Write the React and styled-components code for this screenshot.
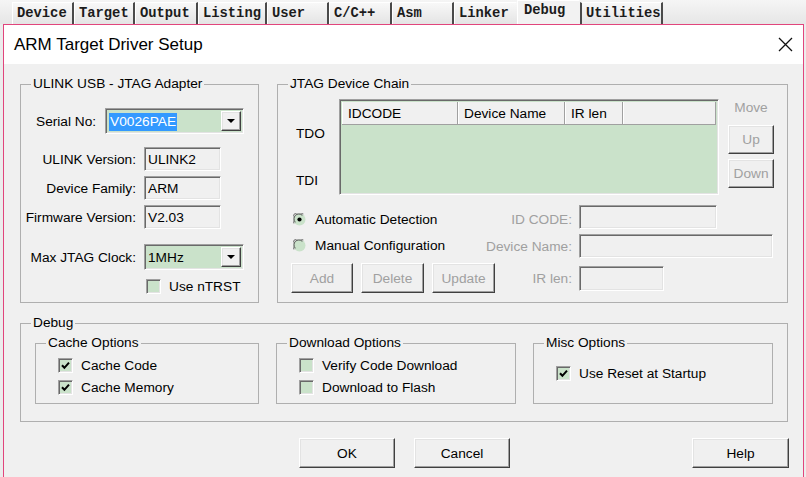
import React from 'react';
import styled, { createGlobalStyle, css } from 'styled-components';

const GREEN = '#cae2ca';
const PINK = '#e1457c';
const MUTED = '#a0a0a0';

const GlobalStyle = createGlobalStyle`
  html, body { margin: 0; padding: 0; background: #f0f0f0; overflow: hidden; }
  body {
    font-family: "Liberation Sans", Arial, sans-serif;
    font-size: 13.7px;
    color: #000;
  }
`;

const sunken = css`
  box-sizing: border-box;
  border: 1px solid;
  border-color: #a0a0a0 #ffffff #ffffff #a0a0a0;
  box-shadow: inset 1px 1px 0 #696969, inset -1px -1px 0 #e3e3e3;
`;

const raised = css`
  box-sizing: border-box;
  border: 1px solid;
  border-color: #ffffff #404040 #404040 #ffffff;
  box-shadow: inset -1px -1px 0 #a0a0a0, inset 1px 1px 0 #e3e3e3;
  background: #f0f0f0;
`;

const Screen = styled.div`
  width: 806px;
  height: 477px;
  overflow: hidden;
  display: flex;
  flex-direction: column;
  background: #ececec;
`;

/* ---------- tab strip behind the dialog ---------- */

const TabStrip = styled.div`
  display: flex;
  align-items: flex-end;
  height: 24px;
  flex-shrink: 0;
  padding-left: 12px;
  background: linear-gradient(#f5f5f5, #e6e6e6);
`;

const Tab = styled.div`
  box-sizing: border-box;
  width: ${p => p.$w}px;
  height: ${p => (p.$active ? 24 : 22)}px;
  padding: ${p => (p.$active ? '2px 0 0 6px' : '0 0 0 4px')};
  display: flex;
  align-items: ${p => (p.$active ? 'flex-start' : 'center')};
  font-family: "Liberation Mono", "Courier New", monospace;
  font-weight: bold;
  font-size: 13.8px;
  color: #1c1c1c;
  background: ${p => (p.$active ? '#f2f2f2' : 'linear-gradient(#f8f8f8, #e4e4e4)')};
  border-top: 1px solid #ffffff;
  border-left: ${p => (p.$leftDark ? '2px solid #4a4a4a' : '1px solid #ffffff')};
  border-right: ${p => (p.$sep ? '2px solid #4a4a4a' : '1px solid transparent')};
`;

/* ---------- dialog frame ---------- */

const Dialog = styled.div`
  flex: 1;
  margin-left: 3px;
  width: 801px;
  box-sizing: border-box;
  border: 1px solid ${PINK};
  border-bottom: none;
  display: flex;
  flex-direction: column;
  background: #f0f0f0;
`;

const TitleBar = styled.div`
  height: 39px;
  flex-shrink: 0;
  display: flex;
  align-items: center;
  justify-content: space-between;
  padding: 0 10px 0 10px;
  background: #ffffff;
`;

const Title = styled.span`
  font-family: "Liberation Sans", Arial, sans-serif;
  font-size: 17px;
  color: #000;
`;

const Body = styled.div`
  padding: 12px 15px 0 16px;
  display: flex;
  flex-direction: column;
`;

const TopRow = styled.div`
  display: flex;
  gap: 18px;
`;

const Group = styled.fieldset`
  margin: 0;
  margin-top: ${p => p.$top || 0}px;
  min-width: 0;
  box-sizing: border-box;
  width: ${p => (p.$w ? `${p.$w}px` : 'auto')};
  flex: ${p => (p.$w ? '0 0 auto' : '1')};
  padding: ${p => p.$pad};
  border: 1px solid #afafaf;
  display: flex;
  flex-direction: column;
`;

const GroupTitle = styled.legend`
  margin-left: 10px;
  padding: 0 2px;
  line-height: 16px;
  font-size: 13.7px;
`;

/* ---------- controls ---------- */

const Label = styled.span`
  color: ${p => (p.$muted ? MUTED : '#000')};
  text-align: ${p => (p.$right ? 'right' : 'left')};
  white-space: nowrap;
  margin-top: ${p => p.$down || 0}px;
`;

const Combo = styled.div`
  ${sunken};
  width: ${p => p.$w}px;
  height: 26px;
  padding: 2px;
  display: flex;
  align-items: center;
  background: ${GREEN};
`;

const ComboText = styled.span`
  flex: 1;
  padding-left: 1px;
`;

const Selected = styled.span`
  background: #3399ff;
  color: #ffffff;
  padding: 1px 1px 2px;
`;

const DropButton = styled.span`
  ${raised};
  width: 20px;
  height: 20px;
  display: flex;
  align-items: center;
  justify-content: center;
  &::after {
    content: '';
    border-left: 4px solid transparent;
    border-right: 4px solid transparent;
    border-top: 4px solid #000;
  }
`;

const Field = styled.div`
  ${sunken};
  width: ${p => p.$w}px;
  height: ${p => p.$h || 24}px;
  padding: 0 3px;
  display: flex;
  align-items: center;
  background: #f0f0f0;
`;

const Button = styled.div`
  ${raised};
  width: ${p => p.$w}px;
  height: ${p => p.$h || 30}px;
  display: flex;
  align-items: center;
  justify-content: center;
  color: ${p => (p.$disabled ? MUTED : '#000')};
`;

const CheckRow = styled.div`
  display: flex;
  align-items: center;
  gap: 8px;
  height: 15px;
  padding-left: ${p => p.$indent || 0}px;
`;

const Box = styled.span`
  ${sunken};
  width: 15px;
  height: 15px;
  flex-shrink: 0;
  display: inline-flex;
  align-items: center;
  justify-content: center;
  background: ${GREEN};
`;

const CheckBox = ({ checked, indent, children }) => (
  <CheckRow $indent={indent}>
    <Box>
      {checked && (
        <svg width="9" height="9" viewBox="0 0 9 9">
          <path d="M1 4.2 L3.4 6.8 L8 1.6" fill="none" stroke="#000" strokeWidth="2" />
        </svg>
      )}
    </Box>
    <span>{children}</span>
  </CheckRow>
);

const RadioRow = styled.div`
  display: flex;
  align-items: center;
  gap: 9px;
  padding-left: 2px;
  margin-top: ${p => p.$down || 0}px;
  margin-bottom: ${p => p.$up || 0}px;
`;

const Radio = ({ on, down, up, children }) => (
  <RadioRow $down={down} $up={up}>
    <svg width="13" height="13" viewBox="0 0 13 13">
      <circle cx="6.5" cy="6.5" r="6" fill={GREEN} />
      <path d="M1.3 10.3 A6 6 0 0 1 10.3 1.3" fill="none" stroke="#8a8a8a" strokeWidth="1.2" />
      <path d="M2.4 9.3 A4.7 4.7 0 0 1 9.3 2.4" fill="none" stroke="#555" strokeWidth="1" />
      {on && <circle cx="6.5" cy="6.5" r="2.1" fill="#000" />}
    </svg>
    <span>{children}</span>
  </RadioRow>
);

/* ---------- ULINK adapter box ---------- */

const SerialRow = styled.div`
  display: flex;
  align-items: center;
  gap: 9px;
  padding-left: 15px;
`;

const InfoGrid = styled.div`
  display: grid;
  grid-template-columns: 115px auto;
  column-gap: 8px;
  row-gap: 5px;
  align-items: center;
  justify-items: start;
  margin-top: ${p => p.$top}px;
  & > ${Label} { justify-self: end; }
`;

const TrstRow = styled.div`
  margin-top: 9px;
`;

/* ---------- JTAG chain box ---------- */

const ChainArea = styled.div`
  display: flex;
  align-items: flex-start;
`;

const PortLabels = styled.div`
  width: 61px;
  box-sizing: border-box;
  padding: 27px 0 0 18px;
  display: flex;
  flex-direction: column;
  gap: 31px;
  line-height: 16px;
`;

const ListView = styled.div`
  ${sunken};
  width: 380px;
  height: 96px;
  padding: 2px;
  display: flex;
  flex-direction: column;
  background: ${GREEN};
`;

const ListHeader = styled.div`
  display: flex;
  height: 23px;
  background: #f0f0f0;
`;

const HeadCell = styled.div`
  box-sizing: border-box;
  width: ${p => (p.$w ? `${p.$w}px` : 'auto')};
  flex: ${p => (p.$w ? '0 0 auto' : '1')};
  padding-left: 6px;
  display: flex;
  align-items: center;
  border-right: 1px solid #a0a0a0;
  border-bottom: 1px solid #a0a0a0;
  box-shadow: inset 1px 0 0 #ffffff;
`;

const MoveCol = styled.div`
  margin-left: 9px;
  padding-top: 1px;
  display: flex;
  flex-direction: column;
  align-items: center;
  gap: 5px;
  & > ${Label} { margin-bottom: 4px; line-height: 16px; }
`;

const ConfigGrid = styled.div`
  display: grid;
  grid-template-columns: 182px 92px auto;
  grid-template-rows: 24px 24px 30px;
  column-gap: 7px;
  row-gap: 5px;
  align-items: center;
  justify-items: start;
  margin-top: 10px;
  padding-left: 13px;
  & > ${Label} { justify-self: end; }
`;

const ButtonRow = styled.div`
  display: flex;
  gap: ${p => p.$gap}px;
`;

/* ---------- debug box ---------- */

const OptionRow = styled.div`
  display: flex;
  gap: 17px;
  padding-left: 14px;
`;

const OptionList = styled.div`
  display: flex;
  flex-direction: column;
  gap: 7px;
  padding-left: 22px;
`;

const Footer = styled.div`
  display: flex;
  margin-top: 16px;
  padding-left: 279px;
  margin-right: -1px;
  & > :last-child { margin-left: auto; }
`;

const tabs = [
  ['Device', 62], ['Target', 61], ['Output', 63], ['Listing', 69], ['User', 62],
  ['C/C++', 63], ['Asm', 62], ['Linker', 63], ['Debug', 63], ['Utilities', 83],
];

export default function App() {
  return (
    <Screen>
      <GlobalStyle />
      <TabStrip>
        {tabs.map(([name, w]) => (
          <Tab
            key={name}
            $w={w}
            $active={name === 'Debug'}
            $sep={name !== 'Debug' && name !== 'Linker'}
            $leftDark={name === 'Utilities'}
          >
            {name}
          </Tab>
        ))}
      </TabStrip>

      <Dialog>
        <TitleBar>
          <Title>ARM Target Driver Setup</Title>
          <svg width="15" height="15" viewBox="0 0 15 15">
            <path d="M1 1 L14 14 M14 1 L1 14" stroke="#111" strokeWidth="1.3" />
          </svg>
        </TitleBar>

        <Body>
          <TopRow>
            <Group $w={239} $pad="16px 0 8px 0">
              <GroupTitle>ULINK USB - JTAG Adapter</GroupTitle>
              <SerialRow>
                <Label>Serial No:</Label>
                <Combo $w={139}>
                  <ComboText><Selected>V0026PAE</Selected></ComboText>
                  <DropButton />
                </Combo>
              </SerialRow>
              <InfoGrid $top={13}>
                <Label $right>ULINK Version:</Label>
                <Field $w={77}>ULINK2</Field>
                <Label $right>Device Family:</Label>
                <Field $w={77}>ARM</Field>
                <Label $right>Firmware Version:</Label>
                <Field $w={77}>V2.03</Field>
              </InfoGrid>
              <InfoGrid $top={15}>
                <Label $right>Max JTAG Clock:</Label>
                <Combo $w={100}>
                  <ComboText>1MHz</ComboText>
                  <DropButton />
                </Combo>
              </InfoGrid>
              <TrstRow>
                <CheckBox indent={125}>Use nTRST</CheckBox>
              </TrstRow>
            </Group>

            <Group $pad="7px 0 8px 0">
              <GroupTitle>JTAG Device Chain</GroupTitle>
              <ChainArea>
                <PortLabels>
                  <span>TDO</span>
                  <span>TDI</span>
                </PortLabels>
                <ListView>
                  <ListHeader>
                    <HeadCell $w={116}>IDCODE</HeadCell>
                    <HeadCell $w={107}>Device Name</HeadCell>
                    <HeadCell $w={58}>IR len</HeadCell>
                    <HeadCell />
                  </ListHeader>
                </ListView>
                <MoveCol>
                  <Label $muted>Move</Label>
                  <Button $w={46} $h={29} $disabled>Up</Button>
                  <Button $w={46} $h={29} $disabled>Down</Button>
                </MoveCol>
              </ChainArea>
              <ConfigGrid>
                <Radio on down={4}>Automatic Detection</Radio>
                <Label $muted $right $down={4}>ID CODE:</Label>
                <Field $w={138} />
                <Radio up={2}>Manual Configuration</Radio>
                <Label $muted $right>Device Name:</Label>
                <Field $w={194} />
                <ButtonRow $gap={8}>
                  <Button $w={62} $disabled>Add</Button>
                  <Button $w={63} $disabled>Delete</Button>
                  <Button $w={63} $disabled>Update</Button>
                </ButtonRow>
                <Label $muted $right>IR len:</Label>
                <Field $w={85} $h={25} />
              </ConfigGrid>
            </Group>
          </TopRow>

          <Group $top={12} $pad="4px 0 17px 0">
            <GroupTitle>Debug</GroupTitle>
            <OptionRow>
              <Group $w={224} $pad="7px 0 8px 0">
                <GroupTitle>Cache Options</GroupTitle>
                <OptionList>
                  <CheckBox checked>Cache Code</CheckBox>
                  <CheckBox checked>Cache Memory</CheckBox>
                </OptionList>
              </Group>
              <Group $w={240} $pad="7px 0 8px 0">
                <GroupTitle>Download Options</GroupTitle>
                <OptionList>
                  <CheckBox>Verify Code Download</CheckBox>
                  <CheckBox>Download to Flash</CheckBox>
                </OptionList>
              </Group>
              <Group $w={240} $pad="15px 0 8px 0">
                <GroupTitle>Misc Options</GroupTitle>
                <OptionList>
                  <CheckBox checked>Use Reset at Startup</CheckBox>
                </OptionList>
              </Group>
            </OptionRow>
          </Group>

          <Footer>
            <ButtonRow $gap={19}>
              <Button $w={96}>OK</Button>
              <Button $w={96}>Cancel</Button>
            </ButtonRow>
            <Button $w={97}>Help</Button>
          </Footer>
        </Body>
      </Dialog>
    </Screen>
  );
}
